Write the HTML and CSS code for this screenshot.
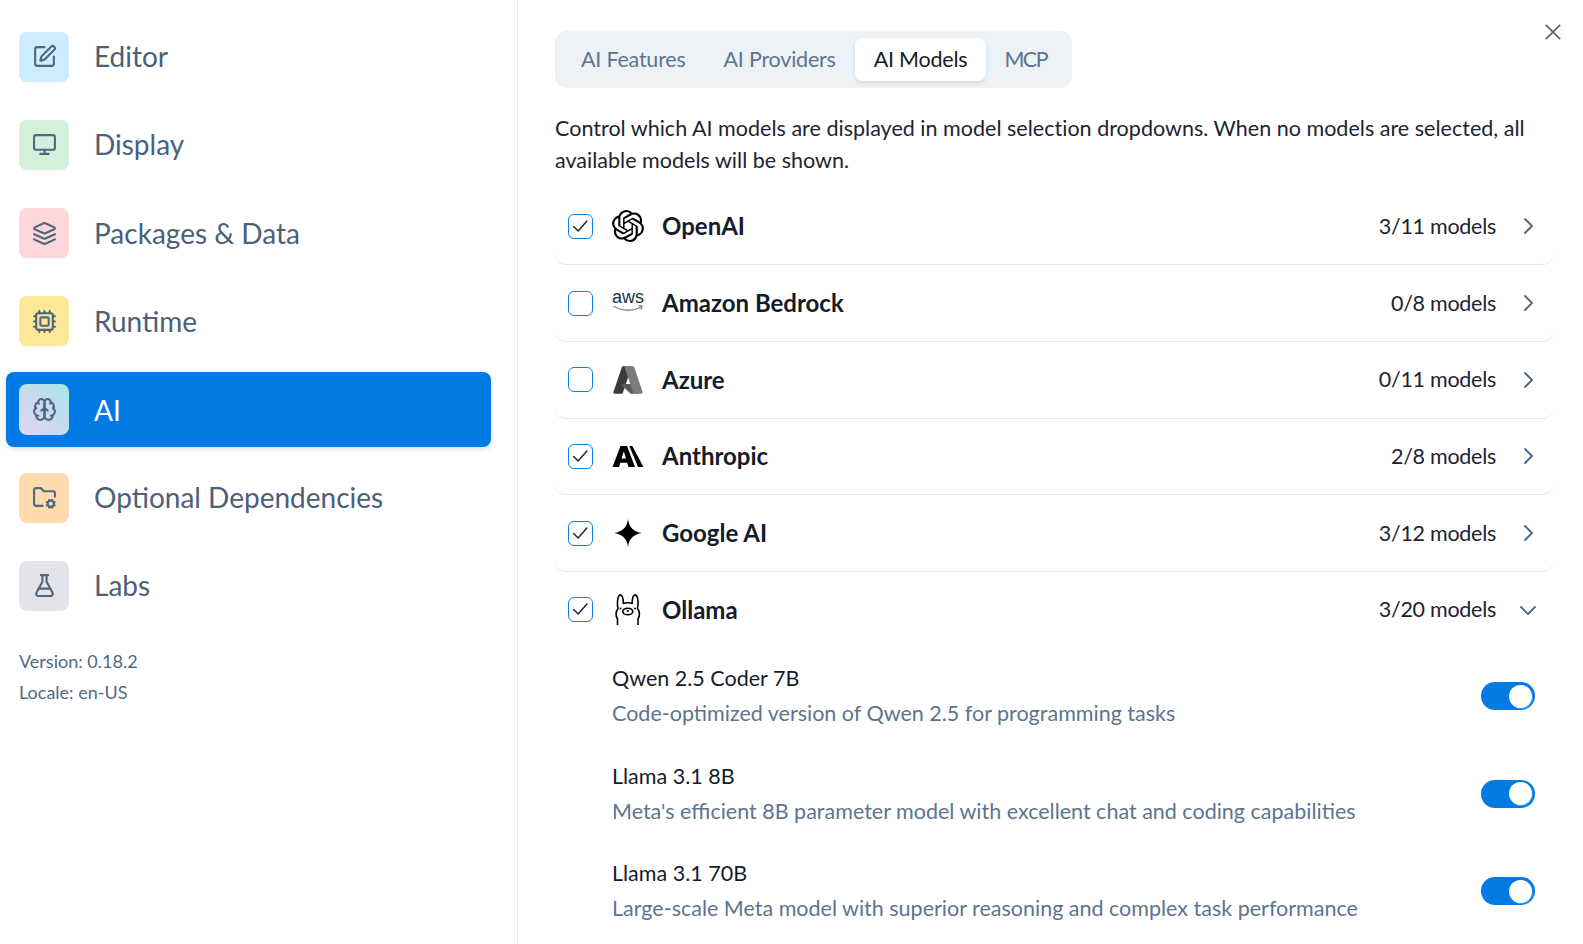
FILE: index.html
```html
<!DOCTYPE html>
<html lang="en">
<head>
    <meta charset="UTF-8">
    <title>Settings</title>
    <link rel="stylesheet" href="styles.css">
</head>
<body>
    <div class="dialog">
        <aside class="sidebar">
            <nav class="nav">
                <a class="nav-item">
                    <span class="nav-icon icon-blue">
                        <svg viewBox="0 0 24 24"><path d="M12 3H5a2 2 0 0 0-2 2v14a2 2 0 0 0 2 2h14a2 2 0 0 0 2-2v-7"/><path d="M18.375 2.625a1 1 0 0 1 3 3l-9.013 9.014a2 2 0 0 1-.853.505l-2.873.84a.5.5 0 0 1-.62-.62l.84-2.873a2 2 0 0 1 .506-.852z"/></svg>
                    </span>
                    <span class="nav-label">Editor</span>
                </a>
                <a class="nav-item">
                    <span class="nav-icon icon-green">
                        <svg viewBox="0 0 24 24"><rect x="2" y="3" width="20" height="14" rx="2"/><path d="M8 21h8"/><path d="M12 17v4"/></svg>
                    </span>
                    <span class="nav-label">Display</span>
                </a>
                <a class="nav-item">
                    <span class="nav-icon icon-red">
                        <svg viewBox="0 0 24 24"><path d="m12.83 2.18a2 2 0 0 0-1.66 0L2.6 6.08a1 1 0 0 0 0 1.83l8.58 3.91a2 2 0 0 0 1.66 0l8.58-3.9a1 1 0 0 0 0-1.83Z"/><path d="m22 17.65-9.17 4.16a2 2 0 0 1-1.66 0L2 17.65"/><path d="m22 12.65-9.17 4.16a2 2 0 0 1-1.66 0L2 12.65"/></svg>
                    </span>
                    <span class="nav-label">Packages &amp; Data</span>
                </a>
                <a class="nav-item">
                    <span class="nav-icon icon-yellow">
                        <svg viewBox="0 0 24 24"><rect x="4" y="4" width="16" height="16" rx="2"/><rect x="8" y="8" width="8" height="8" rx="1"/><path d="M12 20v2M12 2v2M17 20v2M17 2v2M2 12h2M2 17h2M2 7h2M20 12h2M20 17h2M20 7h2M7 20v2M7 2v2"/></svg>
                    </span>
                    <span class="nav-label">Runtime</span>
                </a>
                <a class="nav-item active">
                    <span class="nav-icon icon-gradient">
                        <svg viewBox="0 0 24 24"><path d="M12 5a3 3 0 1 0-5.997.125 4 4 0 0 0-2.526 5.77 4 4 0 0 0 .556 6.588A4 4 0 1 0 12 18Z"/><path d="M12 5a3 3 0 1 1 5.997.125 4 4 0 0 1 2.526 5.77 4 4 0 0 1-.556 6.588A4 4 0 1 1 12 18Z"/><path d="M15 13a4.5 4.5 0 0 1-3-4 4.5 4.5 0 0 1-3 4"/><path d="M17.599 6.5a3 3 0 0 0 .399-1.375"/><path d="M6.003 5.125A3 3 0 0 0 6.401 6.5"/><path d="M3.477 10.896a4 4 0 0 1 .585-.396"/><path d="M19.938 10.5a4 4 0 0 1 .585.396"/><path d="M6 18a4 4 0 0 1-1.967-.516"/><path d="M19.967 17.484A4 4 0 0 1 18 18"/></svg>
                    </span>
                    <span class="nav-label">AI</span>
                </a>
                <a class="nav-item">
                    <span class="nav-icon icon-orange">
                        <svg viewBox="0 0 24 24"><path d="M10.3 20H4a2 2 0 0 1-2-2V5a2 2 0 0 1 2-2h3.98a2 2 0 0 1 1.69.9l.66 1.2A2 2 0 0 0 12 6h8a2 2 0 0 1 2 2v3.3"/><circle cx="18" cy="18" r="3"/><path d="m15.2 16.9-.9-.4M15.2 19.1l-.9.4M16.9 15.2l-.4-.9M16.9 20.8l-.4.9M19.5 14.3l-.4.9M19.5 21.7l-.4-.9M21.7 16.5l-.9.4M21.7 19.5l-.9-.4"/></svg>
                    </span>
                    <span class="nav-label">Optional Dependencies</span>
                </a>
                <a class="nav-item">
                    <span class="nav-icon icon-gray">
                        <svg viewBox="0 0 24 24"><path d="M14 2v6a2 2 0 0 0 .245.96l5.51 10.08A2 2 0 0 1 18 22H6a2 2 0 0 1-1.755-2.96l5.51-10.08A2 2 0 0 0 10 8V2"/><path d="M6.453 15h11.094"/><path d="M8.5 2h7"/></svg>
                    </span>
                    <span class="nav-label">Labs</span>
                </a>
            </nav>
            <div class="meta">
                <div>Version: 0.18.2</div>
                <div>Locale: en-US</div>
            </div>
        </aside>

        <main class="content">
            <button class="close" type="button" aria-label="Close">
                <svg viewBox="0 0 16 16"><path d="M.8.8l14.4 14.4M15.2.8.8 15.200"/></svg>
            </button>

            <div class="tabs">
                <span class="tab">AI Features</span>
                <span class="tab">AI Providers</span>
                <span class="tab selected">AI Models</span>
                <span class="tab tab-short">MCP</span>
            </div>

            <p class="intro">Control which AI models are displayed in model selection dropdowns. When no models are selected, all available models will be shown.</p>

            <section class="provider">
                <span class="check on"><svg viewBox="0 0 24 24"><path d="M5 12.500l5 5 9.500-11"/></svg></span>
                <span class="logo">
                    <svg viewBox="0 0 24 24"><path class="solid" d="M22.2819 9.8211a5.9847 5.9847 0 0 0-.5157-4.9108 6.0462 6.0462 0 0 0-6.5098-2.9A6.0651 6.0651 0 0 0 4.9807 4.1818a5.9847 5.9847 0 0 0-3.9977 2.9 6.0462 6.0462 0 0 0 .7427 7.0966 5.98 5.98 0 0 0 .511 4.9107 6.051 6.051 0 0 0 6.5146 2.9001A5.9847 5.9847 0 0 0 13.2599 24a6.0557 6.0557 0 0 0 5.7718-4.2058 5.9894 5.9894 0 0 0 3.9977-2.9001 6.0557 6.0557 0 0 0-.7475-7.0729zm-9.022 12.6081a4.4755 4.4755 0 0 1-2.8764-1.0408l.1419-.0804 4.7783-2.7582a.7948.7948 0 0 0 .3927-.6813v-6.7369l2.02 1.1686a.071.071 0 0 1 .038.052v5.5826a4.504 4.504 0 0 1-4.4945 4.4944zm-9.6607-4.1254a4.4708 4.4708 0 0 1-.5346-3.0137l.142.0852 4.783 2.7582a.7712.7712 0 0 0 .7806 0l5.8428-3.3685v2.3324a.0804.0804 0 0 1-.0332.0615L9.74 19.9502a4.4992 4.4992 0 0 1-6.1408-1.6464zM2.3408 7.8956a4.485 4.485 0 0 1 2.3655-1.9728V11.6a.7664.7664 0 0 0 .3879.6765l5.8144 3.3543-2.0201 1.1685a.0757.0757 0 0 1-.071 0l-4.8303-2.7865A4.504 4.504 0 0 1 2.3408 7.872zm16.5963 3.8558L13.1038 8.364 15.1192 7.2a.0757.0757 0 0 1 .071 0l4.8303 2.7913a4.4944 4.4944 0 0 1-.6765 8.1042v-5.6772a.79.79 0 0 0-.407-.667zm2.0107-3.0231l-.142-.0852-4.7735-2.7818a.7759.7759 0 0 0-.7854 0L9.409 9.2297V6.8974a.0662.0662 0 0 1 .0284-.0615l4.8303-2.7866a4.4992 4.4992 0 0 1 6.6802 4.66zM8.3065 12.863l-2.02-1.1638a.0804.0804 0 0 1-.038-.0567V6.0742a4.4992 4.4992 0 0 1 7.3757-3.4537l-.142.0805L8.704 5.459a.7948.7948 0 0 0-.3927.6813zm1.0976-2.3654l2.602-1.4998 2.6069 1.4998v2.9994l-2.5974 1.4997-2.6067-1.4997Z"/></svg>
                </span>
                <span class="name">OpenAI</span>
                <span class="count">3/11 models</span>
                <svg class="chevron" viewBox="0 0 24 24"><path d="m9 5 7 7-7 7"/></svg>
            </section>

            <section class="provider">
                <span class="check"></span>
                <span class="logo">
                    <svg viewBox="0 0 32 32"><text class="aws-text" x="16" y="16">aws</text><path class="aws-smile" d="M1.500 19c8 5.500 20.500 5.500 28 .5"/><path class="aws-smile" d="M26.500 18.500l3.500 .5-1 3.500"/></svg>
                </span>
                <span class="name">Amazon Bedrock</span>
                <span class="count">0/8 models</span>
                <svg class="chevron" viewBox="0 0 24 24"><path d="m9 5 7 7-7 7"/></svg>
            </section>

            <section class="provider">
                <span class="check"></span>
                <span class="logo">
                    <svg viewBox="0 0 96 96"><path class="solid azure-left" d="M33.34 6.54h26.04l-27.03 80.1a4.15 4.15 0 0 1-3.94 2.81H8.15a4.14 4.14 0 0 1-3.93-5.47L29.4 9.38a4.15 4.15 0 0 1 3.94-2.83z"/><path class="solid azure-mid" d="M71.17 60.26H29.88a1.91 1.91 0 0 0-1.3 3.31l26.53 24.76a4.17 4.17 0 0 0 2.85 1.12h23.38z"/><path class="solid azure-right" d="M66.6 9.36a4.14 4.14 0 0 0-3.93-2.82H33.65a4.15 4.15 0 0 1 3.93 2.82l25.18 74.62a4.15 4.15 0 0 1-3.93 5.48h29.02a4.15 4.15 0 0 0 3.93-5.48z"/></svg>
                </span>
                <span class="name">Azure</span>
                <span class="count">0/11 models</span>
                <svg class="chevron" viewBox="0 0 24 24"><path d="m9 5 7 7-7 7"/></svg>
            </section>

            <section class="provider">
                <span class="check on"><svg viewBox="0 0 24 24"><path d="M5 12.500l5 5 9.500-11"/></svg></span>
                <span class="logo">
                    <svg viewBox="0 0 32 32"><path class="solid" fill-rule="evenodd" d="M.5 27 8.500 6h6.500L23 27h-6.500l-1.300-4.200H8.300L7 27ZM9.500 18.500h4.500L11.800 11.500Z"/><path class="solid" d="M17.300 6h3L31.500 27h-5.500Z"/></svg>
                </span>
                <span class="name">Anthropic</span>
                <span class="count">2/8 models</span>
                <svg class="chevron" viewBox="0 0 24 24"><path d="m9 5 7 7-7 7"/></svg>
            </section>

            <section class="provider">
                <span class="check on"><svg viewBox="0 0 24 24"><path d="M5 12.500l5 5 9.500-11"/></svg></span>
                <span class="logo">
                    <svg viewBox="0 0 24 24"><path class="solid" d="M12 1.500C12.600 7.500 16.500 11.400 22.500 12 16.500 12.600 12.600 16.500 12 22.500 11.400 16.500 7.500 12.600 1.500 12 7.500 11.400 11.400 7.500 12 1.500Z"/></svg>
                </span>
                <span class="name">Google AI</span>
                <span class="count">3/12 models</span>
                <svg class="chevron" viewBox="0 0 24 24"><path d="m9 5 7 7-7 7"/></svg>
            </section>

            <section class="provider open">
                <span class="check on"><svg viewBox="0 0 24 24"><path d="M5 12.500l5 5 9.500-11"/></svg></span>
                <span class="logo">
                    <svg class="llama" viewBox="0 0 32 32"><path d="M5.500 31V25C3.500 22 3.500 17.500 6 14.500 5 10 5.200 3 7.800 .8 10.500 .8 11.500 5 11.300 9.500 13.500 8.400 18 8.400 20.200 9.500 20 5 21 .8 23.700 .8 26.300 3 26.500 10 25.500 14.500 28 17.500 28 22 26 25V31"/><ellipse cx="15.750" cy="17.500" rx="5" ry="3.300"/><circle class="dot" cx="8.500" cy="14.500" r="1"/><circle class="dot" cx="23" cy="14.500" r="1"/><circle class="dot" cx="15.750" cy="17" r="1.100"/></svg>
                </span>
                <span class="name">Ollama</span>
                <span class="count">3/20 models</span>
                <svg class="chevron" viewBox="0 0 24 24"><path d="m5 9 7 7 7-7"/></svg>
            </section>

            <div class="model">
                <div>
                    <div class="model-name">Qwen 2.5 Coder 7B</div>
                    <div class="model-desc">Code-optimized version of Qwen 2.5 for programming tasks</div>
                </div>
                <span class="toggle"><span class="knob"></span></span>
            </div>
            <div class="model">
                <div>
                    <div class="model-name">Llama 3.1 8B</div>
                    <div class="model-desc">Meta's efficient 8B parameter model with excellent chat and coding capabilities</div>
                </div>
                <span class="toggle"><span class="knob"></span></span>
            </div>
            <div class="model">
                <div>
                    <div class="model-name">Llama 3.1 70B</div>
                    <div class="model-desc">Large-scale Meta model with superior reasoning and complex task performance</div>
                </div>
                <span class="toggle"><span class="knob"></span></span>
            </div>
        </main>
    </div>
</body>
</html>
```

FILE: styles.css
```css
html, body{
    margin: 0;
    padding: 0;
    height: 100%;
    overflow: hidden;
    background: #fff;
}

body{
    font-family: Lato, "Noto Sans", sans-serif;
    color: #141c2c;
}

.dialog{
    display: flex;
    height: 944px;
}

.sidebar{
    width: 518px;
    flex-shrink: 0;
    box-sizing: border-box;
    padding: 19.3px 26px 0 6px;
    border-right: 1px solid #e2e8f0;
}

.nav{
    display: flex;
    flex-direction: column;
    gap: 13.17px;
}

.nav-item{
    display: flex;
    align-items: center;
    gap: 25px;
    height: 75px;
    box-sizing: border-box;
    padding: 0 13px;
    border-radius: 8px;
    font-size: 28px;
    color: #4b6079;
}

.nav-label{
    margin-top: -1px;
}

.nav-item.active{
    background: #017ae3;
    color: #fff;
    box-shadow: 0 2px 5px rgba(15, 23, 42, 0.15);
}

.nav-item.active .nav-label{
    margin-top: 1px;
}

.nav-icon{
    width: 50px;
    height: 50px;
    border-radius: 8px;
    flex-shrink: 0;
    display: flex;
    align-items: center;
    justify-content: center;
}

.nav-item.active .nav-icon{
    height: 51px;
}

.nav-icon svg{
    width: 25px;
    height: 25px;
    fill: none;
    stroke: #4f6680;
    stroke-width: 2;
    stroke-linecap: round;
    stroke-linejoin: round;
}

.icon-blue{ background: #ccecff; }
.icon-green{ background: #d5f0da; }
.icon-red{ background: #ffd6d9; }
.icon-yellow{ background: #fee797; }
.icon-orange{ background: #ffdaae; }
.icon-gray{ background: #e3e4e9; }
.icon-gradient{ background: linear-gradient(to top right, #e6d3f4, #a7e4ea); }

.meta{
    margin-top: 23px;
    padding-left: 13px;
    font-size: 18px;
    line-height: 31px;
    color: #56697f;
}

.content{
    position: relative;
    flex: 1;
    min-width: 0;
    padding: 31px 30px 0 37px;
}

.close{
    position: absolute;
    top: 24px;
    right: 22px;
    width: 16px;
    height: 16px;
    padding: 0;
    border: 0;
    background: none;
}

.close svg{
    display: block;
    width: 16px;
    height: 16px;
    fill: none;
    stroke: #5b6470;
    stroke-width: 1.7;
}

.tabs{
    display: inline-flex;
    padding: 7px;
    height: 57px;
    box-sizing: border-box;
    border-radius: 12px;
    background: #edf2f7;
}

.tab{
    display: flex;
    align-items: center;
    padding: 0 19px 2px;
    border-radius: 8px;
    font-size: 21.5px;
    letter-spacing: -0.22px;
    color: #5d7490;
}

.tab-short{
    padding-left: 18px;
    padding-right: 18px;
    letter-spacing: -1.5px;
}

.tab.selected{
    background: #fff;
    color: #141c2c;
    box-shadow: 0 2px 4px rgba(15, 23, 42, 0.1);
}

.intro{
    margin: 24px 0 12.5px;
    font-size: 21.5px;
    line-height: 32px;
    letter-spacing: 0.02px;
    color: #1c2433;
}

.provider{
    display: flex;
    align-items: center;
    height: 76.7px;
    box-sizing: border-box;
    padding: 0 13px 0 13px;
    border-bottom: 1.5px solid #e2e8f0;
    border-radius: 0 0 10px 10px;
}

.provider.open{
    height: 75.45px;
    border-bottom: 0;
}

.check{
    width: 25px;
    height: 25px;
    box-sizing: border-box;
    border: 1.5px solid #1280e3;
    border-radius: 6px;
    flex-shrink: 0;
}

.check svg{
    display: block;
    width: 22px;
    height: 22px;
    fill: none;
    stroke: #1c2433;
    stroke-width: 1.6;
    stroke-linecap: round;
    stroke-linejoin: round;
}

.logo{
    width: 32px;
    height: 32px;
    margin: 0 18px 0 19px;
    flex-shrink: 0;
}

.logo svg{
    display: block;
    width: 32px;
    height: 32px;
}

.solid{
    fill: #000;
}

.azure-left{ fill: #3b3b3b; }
.azure-mid{ fill: #5c5c5c; }
.azure-right{ fill: #7c7c7c; }

.aws-text{
    font-family: "Liberation Sans", sans-serif;
    font-size: 18px;
    text-anchor: middle;
    fill: #232f3e;
}

.aws-smile{
    fill: none;
    stroke: #8a8a8a;
    stroke-width: 1.4;
}

.llama{
    fill: none;
    stroke: #000;
    stroke-width: 1.6;
    stroke-linejoin: round;
}

.llama .dot{
    fill: #000;
    stroke: none;
}

.name{
    flex: 1;
    padding-bottom: 1px;
    font-size: 24px;
    font-weight: 700;
}

.count{
    padding-bottom: 1px;
    font-size: 21.5px;
    letter-spacing: -0.28px;
    color: #1c2433;
    margin-right: 20px;
}

.chevron{
    width: 24px;
    height: 24px;
    flex-shrink: 0;
    fill: none;
    stroke: #4f6680;
    stroke-width: 1.8;
    stroke-linecap: round;
    stroke-linejoin: round;
}

.model{
    display: flex;
    align-items: center;
    justify-content: space-between;
    height: 97.5px;
    padding: 0 18px 0 57px;
}

.model-name{
    font-size: 21.5px;
    line-height: 35px;
}

.model-desc{
    font-size: 21.5px;
    line-height: 35px;
    color: #5d7490;
}

.toggle{
    display: flex;
    justify-content: flex-end;
    align-items: center;
    width: 54px;
    height: 28px;
    box-sizing: border-box;
    padding-right: 3px;
    border-radius: 14px;
    background: #017ae3;
    flex-shrink: 0;
}

.knob{
    width: 23px;
    height: 23px;
    border-radius: 50%;
    background: #fff;
    box-shadow: 1px 1px 0 #3d9aeb;
}
```
